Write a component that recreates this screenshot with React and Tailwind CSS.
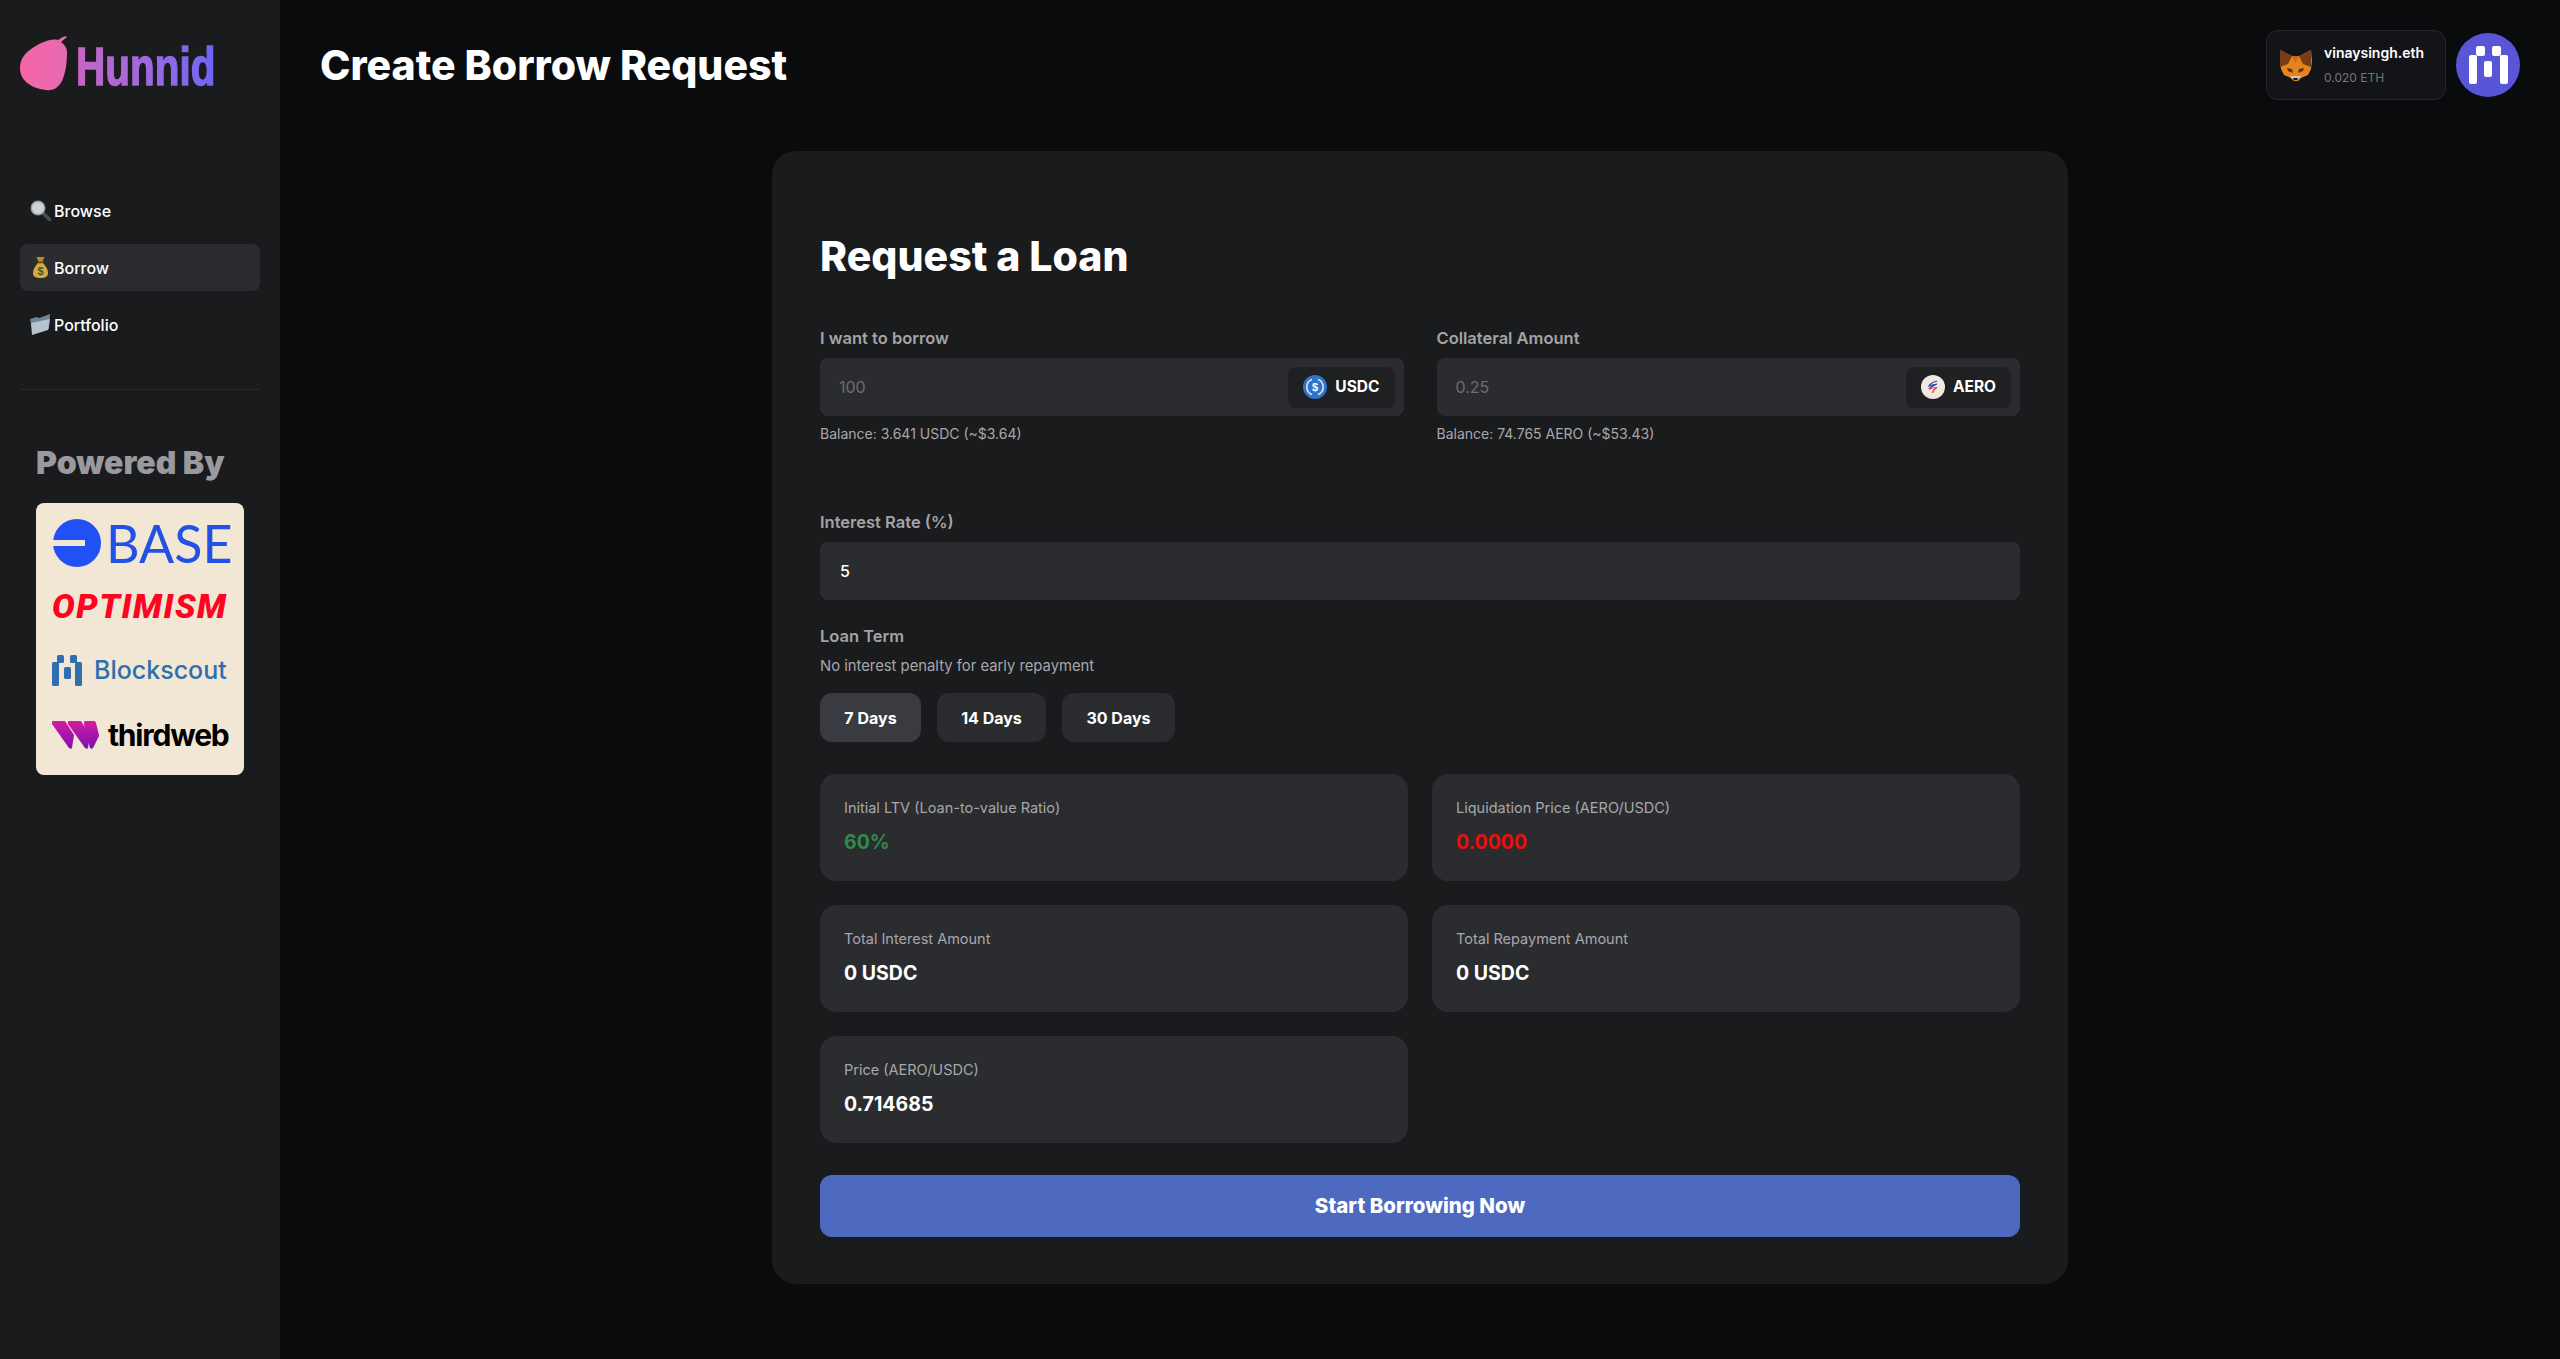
import React from 'react';

const font = { fontFamily: 'Inter, "Open Sans", sans-serif' };

const Pear = () => (
    <svg width="47" height="55" viewBox="0 0 47 55" className="shrink-0">
        <defs>
            <linearGradient id="pearFill" x1="0" x2="1" y1="0" y2="0">
                <stop offset="0" stopColor="#f765a8" />
                <stop offset="1" stopColor="#e46cb4" />
            </linearGradient>
        </defs>
        <path d="M38 4l5-3c2-1 3-1 4 0l-6 5c4 3 6 6 6 10 0 10-1 20-5 29-4 7-9 10-16 9C10 52 0 44 0 32c0-10 6-16 14-21C21 7 30 2 38 4z" fill="url(#pearFill)" />
    </svg>
);

const SearchEmoji = () => (
    <svg width="21" height="21" viewBox="0 0 21 21" className="shrink-0">
        <path d="M12 12l7.500 7.500" stroke="#4a4e52" strokeWidth="3.500" strokeLinecap="round" />
        <circle cx="8" cy="8" r="7.500" fill="#9b9fa3" />
        <circle cx="8" cy="8" r="6" fill="#cfd2d4" />
    </svg>
);

const BagEmoji = () => (
    <svg width="21" height="21" viewBox="0 0 21 21" className="shrink-0">
        <path d="M6.500 0h8l-2 5h-4z" fill="#b98a2c" />
        <path d="M8 6h5c3 3 5 7 5 10 0 4-3 5-7.500 5S3 20 3 16c0-3 2-7 5-10z" fill="#d9a83e" />
        <rect x="7.500" y="4.500" width="6" height="1.800" fill="#6b4a1c" />
        <text x="10.500" y="18" textAnchor="middle" fontSize="11" fontWeight="700" fill="#3d5a2a" fontFamily="Liberation Sans, sans-serif">$</text>
    </svg>
);

const FolderEmoji = () => (
    <svg width="21" height="21" viewBox="0 0 21 21" className="shrink-0">
        <path d="M0 5l7-2 2 1 11-4-1 15-16 5z" fill="#6f8596" />
        <path d="M1 9l19-4-2 11-16 5z" fill="#b5c3cc" />
    </svg>
);

const NavItem = ({ icon, label, active }) => (
    <div className={`h-[47px] rounded-lg flex items-center pl-[10px] gap-[3px] text-[16px] font-medium text-white ${active ? 'bg-[#2b2c30]' : ''}`}>
        {icon}
        <span className="pt-[1px]">{label}</span>
    </div>
);

const BaseLogo = () => (
    <div className="flex items-center gap-[5px] h-[48px] ml-[1px]">
        <svg width="48" height="48" viewBox="0 0 48 48" className="shrink-0">
            <circle cx="24" cy="24" r="24" fill="#2151f5" />
            <rect x="0" y="21" width="32" height="6" fill="#f2e6d4" />
        </svg>
        <span className="text-[52px] leading-none text-[#2151e5]" style={{ fontFamily: 'Lato, sans-serif' }}>BASE</span>
    </div>
);

const BlockscoutLogo = () => (
    <div className="flex items-center gap-[12px] h-[32px] mt-[31px]">
        <svg width="30" height="31" viewBox="0 0 30 31" className="shrink-0" fill="#2f6fb0">
            <rect x="0" y="7" width="7" height="24" rx="1.500" />
            <rect x="5" y="0" width="7" height="8" rx="1.500" />
            <rect x="12" y="12" width="7" height="12" rx="1.500" />
            <rect x="18" y="0" width="7" height="8" rx="1.500" />
            <rect x="23" y="7" width="7" height="24" rx="1.500" />
        </svg>
        <span className="text-[25px] leading-none font-medium text-[#2f6fab]" style={{ fontFamily: 'Inter, sans-serif' }}>Blockscout</span>
    </div>
);

const ThirdwebLogo = () => (
    <div className="flex items-center gap-[9px] h-[30px] mt-[34px]">
        <svg width="47" height="29" viewBox="0 0 47 29" className="shrink-0">
            <defs>
                <linearGradient id="twFill" x1="0" x2="0" y1="0" y2="1">
                    <stop offset="0" stopColor="#d41da3" />
                    <stop offset="1" stopColor="#7c0fb0" />
                </linearGradient>
            </defs>
            <path d="M1 0h12l9 14-2 13c-1 1-2 1-3 0L0 3c-.5-2 0-3 1-3z" fill="url(#twFill)" />
            <path d="M17 0h12l9 14-2 13c-1 1-2 1-3 0L16 3c-.5-2 0-3 1-3z" fill="url(#twFill)" />
            <path d="M33 0h9c1 0 2 1 2 2l3 12c0 1 0 2-1 3l-5 10c-1 1-2 1-3 0L32 3c0-2 0-3 1-3z" fill="url(#twFill)" />
        </svg>
        <span className="text-[30px] leading-none font-bold text-black tracking-[-1.200px]" style={{ fontFamily: 'Inter, sans-serif' }}>thirdweb</span>
    </div>
);

const Sidebar = () => (
    <aside className="w-[280px] shrink-0 bg-[#1a1b1d] px-[20px] min-h-screen">
        <div className="h-[187px] pt-[36px]">
            <div className="flex items-start gap-[9px]">
                <Pear />
                <span
                    className="text-[54px] leading-[60px] font-bold text-transparent bg-clip-text bg-gradient-to-r from-[#c765c4] to-[#6f66f5] scale-x-[0.75] origin-left [-webkit-text-stroke:1.500px_transparent]"
                    style={{ fontFamily: '"Liberation Sans", sans-serif' }}
                >
                    Hunnid
                </span>
            </div>
        </div>
        <nav className="flex flex-col gap-[10px]">
            <NavItem icon={<SearchEmoji />} label="Browse" />
            <NavItem icon={<BagEmoji />} label="Borrow" active />
            <NavItem icon={<FolderEmoji />} label="Portfolio" />
        </nav>
        <div className="border-t border-[#2a2b2f] mt-[41px]" />
        <div className="px-[16px] pt-[50px]">
            <h3 className="text-[32px] leading-[46px] font-black text-[#9a9a9e] mb-[17px] whitespace-nowrap">Powered By</h3>
            <div className="w-[208px] h-[272px] bg-[#f2e6d4] rounded-lg px-[16px] pt-[16px] flex flex-col">
                <BaseLogo />
                <div className="text-[34px] leading-[34px] mt-[22px] font-black italic text-[#ff0420] tracking-[1.500px] whitespace-nowrap" style={{ fontFamily: 'Roboto, sans-serif' }}>OPTIMISM</div>
                <BlockscoutLogo />
                <ThirdwebLogo />
            </div>
        </div>
    </aside>
);

const Fox = () => (
    <svg width="33" height="32" viewBox="0 0 33 32" className="shrink-0">
        <path d="M1 1l12 6h7l12-6 1 11-1 8-3 6-7 3-3 3h-4l-3-3-7-3-3-6-1-8z" fill="#e8821e" />
        <path d="M1 1l12 6-4 8-8 3zM32 1L20 7l4 8 8 3z" fill="#763d16" />
        <path d="M13 7h7l-3.500 7z" fill="#c8691a" />
        <path d="M8 19l5 1 1 4-5-2zM25 19l-5 1-1 4 5-2z" fill="#5d3413" />
        <path d="M11 27h11l-2 3h-7z" fill="#d5c2b2" />
        <path d="M14 29h5l-1 2h-3z" fill="#161616" />
    </svg>
);

const Wallet = () => (
    <div className="flex items-center gap-[10px] self-start">
        <div className="w-[180px] h-[70px] rounded-xl border border-[#26272b] bg-[#131417] flex items-center pl-[12px] gap-[12px]">
            <Fox />
            <div className="flex flex-col gap-[8px]">
                <span className="text-[14px] leading-[18px] font-semibold text-white">vinaysingh.eth</span>
                <span className="text-[12px] leading-[16px] text-[#75767a]">0.020 ETH</span>
            </div>
        </div>
        <div className="w-[64px] h-[64px] rounded-full bg-[#5856d6] flex items-center justify-center">
            <svg width="39" height="38" viewBox="0 0 39 38" fill="#fff">
                <rect x="0" y="9" width="8" height="29" rx="2" />
                <rect x="7" y="0" width="9" height="10" rx="2" />
                <rect x="15" y="15" width="8" height="16" rx="2" />
                <rect x="23" y="0" width="9" height="10" rx="2" />
                <rect x="31" y="9" width="8" height="29" rx="2" />
            </svg>
        </div>
    </div>
);

const UsdcIcon = () => (
    <svg width="24" height="24" viewBox="0 0 24 24" className="shrink-0">
        <circle cx="12" cy="12" r="12" fill="#2f74c8" />
        <path d="M9 4.500a8 8 0 0 0 0 15M15 4.500a8 8 0 0 1 0 15" stroke="#d8e6f6" strokeWidth="1.600" fill="none" />
        <text x="12" y="16" textAnchor="middle" fontSize="11" fontWeight="700" fill="#fff" fontFamily="Liberation Sans, sans-serif">$</text>
    </svg>
);

const AeroIcon = () => (
    <svg width="24" height="24" viewBox="0 0 24 24" className="shrink-0">
        <circle cx="12" cy="12" r="12" fill="#efe9e0" />
        <path d="M16 6C12 7 9 9 8 11c2.500-1 5-1.500 8-2-3 1-6 3-8 5" stroke="#2b3bbd" strokeWidth="1.200" fill="none" />
        <path d="M8 14c3-1 6-1.500 8-1.500-2 1-4 3-4.500 5.500" stroke="#e5383b" strokeWidth="1.200" fill="none" />
    </svg>
);

const TokenInput = ({ label, placeholder, token, icon, balance }) => (
    <div className="flex-1">
        <label className="block text-[16.500px] leading-[20px] font-semibold text-[#a3a3a6] mb-[10px]">{label}</label>
        <div className="h-[58px] rounded-lg bg-[#2b2c30] flex items-center justify-between pl-[19px] pr-[9px]">
            <span className="text-[16px] text-[#6b6c70]">{placeholder}</span>
            <div className="h-[41px] rounded-lg bg-[#1f2022] flex items-center gap-[8px] px-[15px]">
                {icon}
                <span className="text-[15.500px] font-bold text-white">{token}</span>
            </div>
        </div>
        <p className="text-[14px] leading-[20px] text-[#a8a8ab] mt-[8px]">{balance}</p>
    </div>
);

const StatCard = ({ label, value, valueClass }) => (
    <div className="h-[107px] rounded-2xl bg-[#2b2c30] px-[24px] pt-[24px]">
        <p className="text-[14.500px] leading-[20px] text-[#a8a8ab]">{label}</p>
        <p className={`text-[19.500px] leading-[28px] font-bold mt-[10px] ${valueClass || 'text-white'}`}>{value}</p>
    </div>
);

const TermButton = ({ label, width, active }) => (
    <button className={`h-[49px] rounded-xl text-[16px] font-bold text-white ${width} ${active ? 'bg-[#3a3b40]' : 'bg-[#2b2c30]'}`}>{label}</button>
);

export default function App() {
    return (
        <div className="flex min-h-screen bg-[#0a0b0d] overflow-hidden" style={font}>
            <Sidebar />
            <main className="flex-1 px-[40px]">
                <header className="h-[151px] flex justify-between pt-[30px]">
                    <h1 className="text-[41px] leading-[70px] font-extrabold text-white h-fit">Create Borrow Request</h1>
                    <Wallet />
                </header>

                <div className="w-[1296px] h-[1133px] mx-auto rounded-3xl bg-[#1a1b1d] px-[48px] pt-[74px]">
                    <h2 className="text-[41px] leading-[62px] font-extrabold text-white mb-[41px]">Request a Loan</h2>

                    <div className="flex gap-[33px] h-[184px]">
                        <TokenInput label="I want to borrow" placeholder="100" token="USDC" icon={<UsdcIcon />} balance="Balance: 3.641 USDC (~$3.64)" />
                        <TokenInput label="Collateral Amount" placeholder="0.25" token="AERO" icon={<AeroIcon />} balance="Balance: 74.765 AERO (~$53.43)" />
                    </div>

                    <label className="block text-[16.500px] leading-[20px] font-semibold text-[#a3a3a6] mb-[10px]">Interest Rate (%)</label>
                    <div className="h-[58px] rounded-lg bg-[#2b2c30] flex items-center pl-[20px] text-[16px] font-medium text-white">5</div>

                    <label className="block text-[16.500px] leading-[20px] font-semibold text-[#a3a3a6] mt-[26px]">Loan Term</label>
                    <p className="text-[14.800px] leading-[20px] text-[#a8a8ab] mt-[10px]">No interest penalty for early repayment</p>
                    <div className="flex gap-[16px] mt-[17px]">
                        <TermButton label="7 Days" width="w-[101px]" active />
                        <TermButton label="14 Days" width="w-[109px]" />
                        <TermButton label="30 Days" width="w-[113px]" />
                    </div>

                    <div className="grid grid-cols-2 gap-[24px] mt-[32px]">
                        <StatCard label="Initial LTV (Loan-to-value Ratio)" value="60%" valueClass="text-[#2e8b47]" />
                        <StatCard label="Liquidation Price (AERO/USDC)" value="0.0000" valueClass="text-[#ee0d0d]" />
                        <StatCard label="Total Interest Amount" value="0 USDC" />
                        <StatCard label="Total Repayment Amount" value="0 USDC" />
                        <StatCard label="Price (AERO/USDC)" value="0.714685" />
                    </div>

                    <button className="w-full h-[62px] rounded-xl bg-[#4e6ac0] text-[20.500px] font-extrabold text-white mt-[32px]">Start Borrowing Now</button>
                </div>
            </main>
        </div>
    );
}
